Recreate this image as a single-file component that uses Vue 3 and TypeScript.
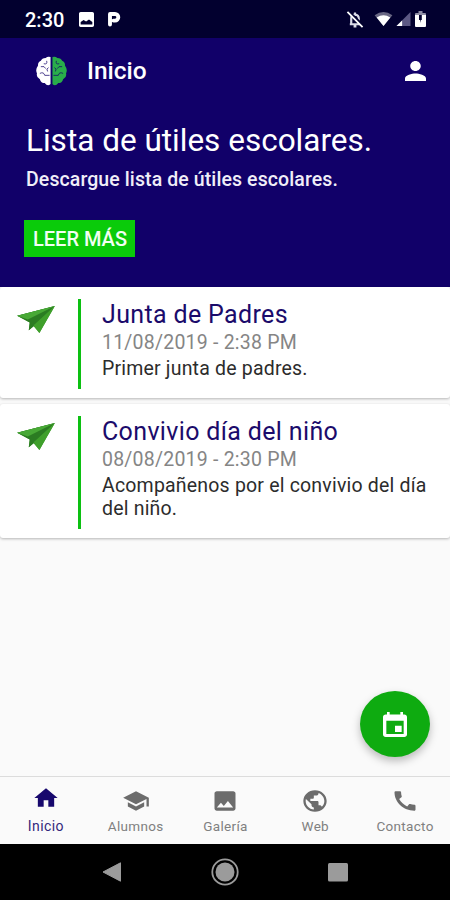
<script setup lang="ts">
interface Notice {
  title: string
  date: string
  body: string
}

interface Tab {
  label: string
  icon: string
  active?: boolean
}

const notices: Notice[] = [
  { title: 'Junta de Padres', date: '11/08/2019 - 2:38 PM', body: 'Primer junta de padres.' },
  { title: 'Convivio día del niño', date: '08/08/2019 - 2:30 PM', body: 'Acompañenos por el convivio del día del niño.' },
]

const tabs: Tab[] = [
  { label: 'Inicio', icon: 'M10 20v-6h4v6h5v-8h3L12 3 2 12h3v8z', active: true },
  { label: 'Alumnos', icon: 'M5 13.18v4L12 21l7-3.82v-4L12 17l-7-3.82zM12 3L1 9l11 6 9-4.91V17h2V9L12 3z' },
  { label: 'Galería', icon: 'M21 19V5c0-1.1-.9-2-2-2H5c-1.1 0-2 .9-2 2v14c0 1.1.9 2 2 2h14c1.1 0 2-.9 2-2zM8.5 13.5l2.5 3.01L14.5 12l4.5 6H5l3.5-4.5z' },
  { label: 'Web', icon: 'M12 2C6.48 2 2 6.48 2 12s4.48 10 10 10 10-4.48 10-10S17.52 2 12 2zm-1 17.93c-3.95-.49-7-3.85-7-7.93 0-.62.08-1.21.21-1.79L9 15v1c0 1.1.9 2 2 2v1.93zm6.9-2.54c-.26-.81-1-1.39-1.9-1.39h-1v-3c0-.55-.45-1-1-1H8v-2h2c.55 0 1-.45 1-1V7h2c1.1 0 2-.9 2-2v-.41c2.93 1.19 5 4.06 5 7.41 0 2.08-.8 3.97-2.1 5.39z' },
  { label: 'Contacto', icon: 'M20.01 15.38c-1.23 0-2.42-.2-3.53-.56-.35-.12-.74-.03-1.01.24l-1.57 1.97c-2.83-1.35-5.48-3.9-6.89-6.83l1.95-1.66c.27-.28.35-.67.24-1.02-.37-1.11-.56-2.3-.56-3.53 0-.54-.45-.99-.99-.99H4.19C3.65 3 3 3.24 3 3.99 3 13.28 10.73 21 20.01 21c.71 0 .99-.63.99-1.18v-3.45c0-.54-.45-.99-.99-.99z' },
]
</script>

<template>
  <div class="screen">
    <div class="status">
      <span class="clock">2:30</span>
      <svg class="s-photo" viewBox="3 3 18 18" preserveAspectRatio="none"><path fill="#fff" d="M21 19V5c0-1.1-.9-2-2-2H5c-1.1 0-2 .9-2 2v14c0 1.1.9 2 2 2h14c1.1 0 2-.9 2-2zM5 18v-3l3.500-2.500 3 2L15 12l4 3v3z" /></svg>
      <svg class="s-p" viewBox="0 0 14 16"><path fill="none" stroke="#fff" stroke-width="3.900" stroke-linecap="round" stroke-linejoin="round" d="M3 13.500V3H8A3.300 3.300 0 0 1 8 9.600H6.500" /></svg>
      <span class="grow"></span>
      <svg class="s-bell" viewBox="0 0 18 18"><path fill="none" stroke="#dcdce8" stroke-width="2.300" d="M3.500 14H14.500M5 14V8Q5 4 9 3.800Q13 4 13 8V14M9 1.500V4M7.500 16.200H10.500" /><path stroke="#02002f" stroke-width="3" d="M2 .5L18 16" /><path stroke="#fff" stroke-width="1.900" d="M1 1L17 17" /></svg>
      <svg class="s-wifi" viewBox="0 0 19 15"><path fill="#696784" d="M0 3.500Q9.500-3.500 19 3.500L9.500 15Z" /><path fill="#fff" d="M2.200 6Q9.500 1.200 16.800 6L9.500 15Z" /></svg>
      <svg class="s-cell" viewBox="0 0 15 15"><path fill="#5c5884" d="M15 0V15H0Z" /><path fill="#fff" d="M6 9V15H0Z" /></svg>
      <svg class="s-batt" viewBox="0 0 11 16"><path fill="#fff" d="M0 3.500H11V15Q11 16 10 16H1Q0 16 0 15Z" /><path fill="#8e8ca4" d="M3.500 0H7.500V2H10Q11 2 11 3V4H0V3Q0 2 1 2H3.500Z" /><path fill="#02002f" d="M4 4H6.800V9H5.800L5 12V9H4Z" /></svg>
    </div>

    <header class="appbar">
      <svg class="brain" viewBox="0 0 32 31">
        <path fill="#fff" d="M15 1Q12 0 10 2Q6 2 5 5Q2 6 2 10Q-1 14 1 18Q0 22 4 24Q5 28 9 28Q12 32 15 29Z" />
        <path fill="#29ad4a" d="M17 1Q20 0 22 2Q26 2 27 5Q30 6 30 10Q33 14 31 18Q32 22 28 24Q27 28 23 28Q20 32 17 29Z" />
        <path class="folds" d="M11 5Q12 9 8 8M5 11Q9 10 10 13M13 12Q10 13 12 16M4 18Q8 16 9 20H14M21 5Q20 9 24 8M27 11Q23 10 22 13M19 12Q22 13 20 16M28 18Q24 16 23 20H18" />
      </svg>
      <h1>Inicio</h1>
      <svg class="person" viewBox="4 4 16 16" preserveAspectRatio="none"><path fill="#fff" d="M12 12c2.210 0 4-1.790 4-4s-1.790-4-4-4-4 1.790-4 4 1.790 4 4 4zm0 2c-2.670 0-8 1.340-8 4v2h16v-2c0-2.660-5.330-4-8-4z" /></svg>
    </header>

    <section class="hero">
      <h2>Lista de útiles escolares.</h2>
      <p>Descargue lista de útiles escolares.</p>
      <button type="button">LEER MÁS</button>
    </section>

    <main>
      <article v-for="n in notices" :key="n.title" class="card">
        <svg class="plane" viewBox="0 0 40 29">
          <path fill="#3d9d2c" d="M0 10L39 0L23 28L17 21L12 25L13 17Z" />
          <path fill="#2b7c22" d="M0 10L39 0L13 17ZM13 17L39 0L17 21L12 25Z" />
          <path fill="#48a936" d="M0 10L39 0L11 14Z" />
          <path fill="#3f9f2b" d="M39 0L17 20L23 28Z" />
        </svg>
        <div class="rule"></div>
        <div class="copy">
          <h3>{{ n.title }}</h3>
          <time>{{ n.date }}</time>
          <p>{{ n.body }}</p>
        </div>
      </article>
      <button class="fab" type="button" aria-label="Calendario">
        <svg viewBox="3 1 18 20" preserveAspectRatio="none"><path fill="#fff" d="M19 3h-1V1h-2v2H8V1H6v2H5c-1.110 0-2 .9-2 2v14c0 1.100.89 2 2 2h14c1.100 0 2-.9 2-2V5c0-1.100-.9-2-2-2zm-.5 15.500h-13V8h13v10.500zm-1.500-6.500h-5v5h5v-5z" /></svg>
      </button>
    </main>

    <nav class="tabs">
      <a v-for="t in tabs" :key="t.label" :class="{ active: t.active }">
        <svg viewBox="0 0 24 24" preserveAspectRatio="none"><path fill="currentColor" :d="t.icon" /></svg>
        <span>{{ t.label }}</span>
      </a>
    </nav>

    <div class="system">
      <svg viewBox="0 0 20 20"><path fill="#9b9b9b" stroke="#9b9b9b" stroke-linejoin="round" d="M1 10L18.500 .8V19.200Z" /></svg>
      <svg class="home" viewBox="0 0 28 28"><circle cx="14" cy="14" r="12.700" fill="none" stroke="#9b9b9b" stroke-width="1.800" /><circle cx="14" cy="14" r="9.500" fill="#9b9b9b" /></svg>
      <svg viewBox="0 0 20 20"><rect y="1" width="20" height="18.500" rx="1.500" fill="#9b9b9b" /></svg>
    </div>
  </div>
</template>

<style>
body {
  margin: 0;
  background: #000;
}
</style>

<style scoped>
.screen {
  width: 450px;
  height: 900px;
  display: flex;
  flex-direction: column;
  overflow: hidden;
  background: #fafafa;
  font-family: Roboto, "Liberation Sans", sans-serif;
}
h1, h2, h3, p { margin: 0; font-weight: 400; }
svg { display: block; flex: none; }
button { border: 0; font: inherit; }

.status {
  height: 38px;
  box-sizing: border-box;
  padding: 0 24px 0 25px;
  display: flex;
  align-items: center;
  background: #02002f;
  color: #fff;
}
.clock { width: 54px; font-size: 20px; font-weight: 500; line-height: 38px; padding-top: 1px; }
.s-photo { width: 15px; height: 15px; }
.s-p { width: 14px; height: 16px; margin-left: 13px; }
.grow { flex: 1; }
.s-bell { width: 18px; height: 17px; }
.s-wifi { width: 19px; height: 14px; margin-left: 10px; }
.s-cell { width: 15px; height: 14px; margin-left: 3px; }
.s-batt { width: 11px; height: 16px; margin-left: 4px; }

.appbar {
  height: 66px;
  box-sizing: border-box;
  padding: 0 24px 0 36px;
  display: flex;
  align-items: center;
  background: #110069;
  color: #fff;
}
.brain { width: 31px; height: 30px; }
.folds { fill: none; stroke: #110069; stroke-width: 1; opacity: .75; }
.appbar h1 { flex: 1; margin-left: 20px; font-size: 24.5px; line-height: 28px; padding-bottom: 1px; font-weight: 500; }
.person { width: 21px; height: 20px; }

.hero {
  height: 183px;
  box-sizing: border-box;
  padding: 19px 24px 0 26px;
  background: #110069;
  color: #fff;
  white-space: nowrap;
}
.hero h2 { font-size: 31.5px; line-height: 36px; }
.hero p { margin-top: 10px; font-size: 19.5px; line-height: 22px; font-weight: 500; letter-spacing: .1px; color: #f0eef8; }
.hero button {
  display: block;
  width: 111px;
  height: 37px;
  margin: 29px 0 0 -2px;
  padding: 1px 0 0 9px;
  background: #0acb0a;
  color: #f2fff2;
  font-size: 20px;
  font-weight: 500;
  text-align: left;
}

main { position: relative; flex: 1; }
.card {
  box-sizing: border-box;
  margin-bottom: 6px;
  padding: 12px 16px 9px 17px;
  display: flex;
  background: #fff;
  border-radius: 3px;
  box-shadow: 0 1px 3px rgba(0, 0, 0, .28);
}
.plane { width: 39px; height: 28px; margin-top: 7px; }
.rule { width: 3px; margin-left: 22px; background: #0cc012; }
.copy { flex: 1; min-width: 0; margin-left: 21px; }
.copy h3 { font-size: 25px; line-height: 31px; letter-spacing: .35px; color: #1b0b6b; }
.copy time { display: block; font-size: 19.5px; line-height: 26px; letter-spacing: .22px; color: #858585; }
.copy p { width: 329px; margin-top: 2px; font-size: 19.5px; line-height: 22.5px; letter-spacing: .19px; padding-bottom: 8.5px; color: #2c2c2c; }

.fab {
  position: absolute;
  right: 20px;
  bottom: 19px;
  width: 70px;
  height: 66px;
  padding: 0;
  display: grid;
  place-items: center;
  border-radius: 50%;
  background: #0eab10;
  box-shadow: 0 4px 8px rgba(0, 0, 0, .26);
}
.fab svg { width: 24px; height: 25px; }

.tabs {
  height: 68px;
  box-sizing: border-box;
  padding-left: 1px;
  display: flex;
  border-top: 1px solid #dcdcdc;
  background: #fafafa;
  color: #6c6c6c;
}
.tabs a {
  flex: 1;
  padding-top: 11px;
  display: flex;
  flex-direction: column;
  align-items: center;
}
.tabs svg { width: 28px; height: 26px; }
.tabs span { margin-top: 4px; font-size: 13.5px; line-height: 16px; letter-spacing: .33px; color: #808080; }
.tabs .active { padding-top: 8px; color: #17086d; }
.tabs .active span { margin-top: 7px; font-size: 14px; letter-spacing: .4px; color: #33277c; }

.system {
  height: 56px;
  padding: 0 102px;
  display: flex;
  align-items: center;
  justify-content: space-between;
  background: #000;
}
.system svg { width: 20px; height: 20px; }
.system .home { width: 28px; height: 28px; }
</style>
